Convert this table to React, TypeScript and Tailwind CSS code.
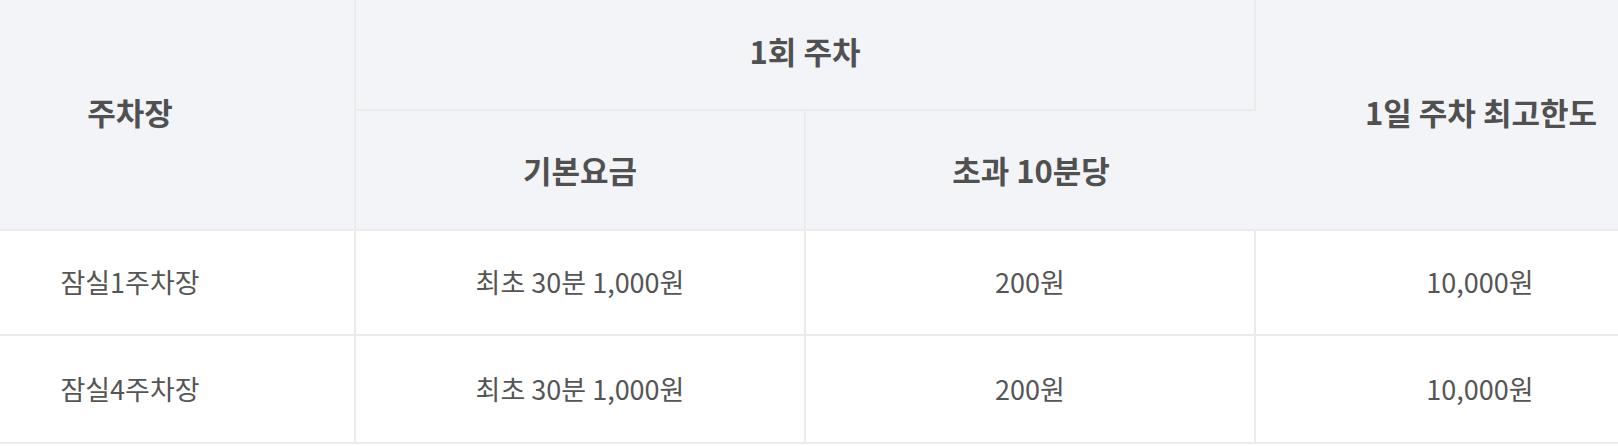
const rows = [
  { name: '잠실1주차장', base: '최초 30분 1,000원', extra: '200원', max: '10,000원' },
  { name: '잠실4주차장', base: '최초 30분 1,000원', extra: '200원', max: '10,000원' },
]

const font = { fontFamily: '"Noto Sans CJK KR", "Noto Sans", sans-serif' }

export default function App() {
  return (
    <div className="w-full h-[446px] overflow-hidden bg-white" style={font}>
      <div className="ml-[-94px] w-[1800px] grid grid-cols-[450px_450px_450px_450px] grid-rows-[111px_120px_105px_108px] text-[#555555]">
        {/* header */}
        <div className="row-span-2 flex items-center justify-center pb-[4px] bg-[#f3f4f8] border-r-2 border-b-2 border-[#ebebeb] text-[31px] font-bold text-[#505050]">
          주차장
        </div>
        <div className="col-span-2 flex items-center justify-center pb-[6px] bg-[#f3f4f8] border-r-2 border-b-2 border-[#ebebeb] text-[31px] font-bold text-[#505050]">
          1회 주차
        </div>
        <div className="row-span-2 flex items-center justify-center pb-[4px] bg-[#f3f4f8] border-b-2 border-[#ebebeb] text-[31px] font-bold text-[#505050]">
          1일 주차 최고한도
        </div>
        <div className="flex items-center justify-center bg-[#f3f4f8] border-r-2 border-b-2 border-[#ebebeb] text-[31px] font-bold text-[#505050]">
          기본요금
        </div>
        <div className="flex items-center justify-center bg-[#f3f4f8] border-b-2 border-[#ebebeb] text-[31px] font-bold text-[#505050]">
          초과 10분당
        </div>

        {/* body */}
        {rows.map((r) => (
          <div key={r.name} className="contents">
            <div className="flex items-center justify-center border-r-2 border-b-2 border-[#ebebeb] text-[27px]">
              {r.name}
            </div>
            <div className="flex items-center justify-center border-r-2 border-b-2 border-[#ebebeb] text-[27px]">
              {r.base}
            </div>
            <div className="flex items-center justify-center border-r-2 border-b-2 border-[#ebebeb] text-[27px]">
              {r.extra}
            </div>
            <div className="flex items-center justify-center border-r-2 border-b-2 border-[#ebebeb] text-[27px]">
              {r.max}
            </div>
          </div>
        ))}
      </div>
    </div>
  )
}
